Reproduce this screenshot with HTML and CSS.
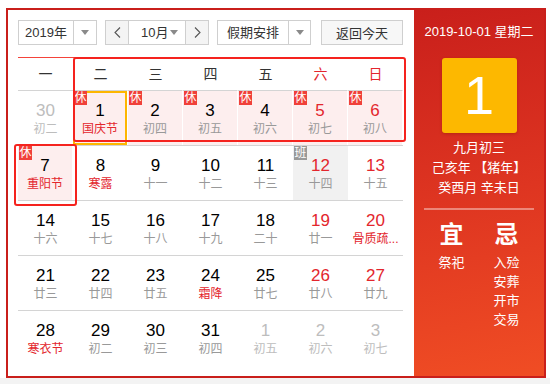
FILE: index.html
```html
<!DOCTYPE html>
<html lang="zh-CN">
<head>
    <meta charset="UTF-8">
    <meta name="viewport" content="width=device-width, initial-scale=1.0">
    <title>万年历</title>
    <link rel="stylesheet" href="styles.css">
</head>
<body>
    <div class="page">
        <div class="calendar">
            <div class="main">
                <!-- Toolbar -->
                <div class="toolbar">
                    <div class="select year-select">
                        <span class="select-text">2019年</span>
                        <span class="select-arrow"><i class="caret"></i></span>
                    </div>
                    <div class="select month-select">
                        <span class="nav-btn">
                            <svg width="7" height="11" viewBox="0 0 7 11"><path d="M6 0.5 L1 5.5 L6 10.5" fill="none" stroke="#555" stroke-width="1.1"/></svg>
                        </span>
                        <span class="month-mid">
                            <span class="select-text">10月</span>
                            <i class="caret"></i>
                        </span>
                        <span class="nav-btn">
                            <svg width="7" height="11" viewBox="0 0 7 11"><path d="M1 0.5 L6 5.5 L1 10.5" fill="none" stroke="#555" stroke-width="1.1"/></svg>
                        </span>
                    </div>
                    <div class="select holiday-select">
                        <span class="select-text">假期安排</span>
                        <span class="select-arrow"><i class="caret"></i></span>
                    </div>
                    <button class="today-btn">返回今天</button>
                </div>

                <!-- Month grid -->
                <div class="grid">
                    <div class="week-head">一</div>
                    <div class="week-head">二</div>
                    <div class="week-head">三</div>
                    <div class="week-head">四</div>
                    <div class="week-head">五</div>
                    <div class="week-head red">六</div>
                    <div class="week-head red">日</div>

                    <div class="day other"><b>30</b><span>初二</span></div>
                    <div class="day rest today"><em class="badge">休</em><b>1</b><span class="fest">国庆节</span></div>
                    <div class="day rest"><em class="badge">休</em><b>2</b><span>初四</span></div>
                    <div class="day rest"><em class="badge">休</em><b>3</b><span>初五</span></div>
                    <div class="day rest"><em class="badge">休</em><b>4</b><span>初六</span></div>
                    <div class="day rest weekend"><em class="badge">休</em><b>5</b><span>初七</span></div>
                    <div class="day rest weekend"><em class="badge">休</em><b>6</b><span>初八</span></div>

                    <div class="day rest"><em class="badge">休</em><b>7</b><span class="fest">重阳节</span></div>
                    <div class="day"><b>8</b><span class="fest">寒露</span></div>
                    <div class="day"><b>9</b><span>十一</span></div>
                    <div class="day"><b>10</b><span>十二</span></div>
                    <div class="day"><b>11</b><span>十三</span></div>
                    <div class="day work weekend"><em class="badge gray">班</em><b>12</b><span>十四</span></div>
                    <div class="day weekend"><b>13</b><span>十五</span></div>

                    <div class="day"><b>14</b><span>十六</span></div>
                    <div class="day"><b>15</b><span>十七</span></div>
                    <div class="day"><b>16</b><span>十八</span></div>
                    <div class="day"><b>17</b><span>十九</span></div>
                    <div class="day"><b>18</b><span>二十</span></div>
                    <div class="day weekend"><b>19</b><span>廿一</span></div>
                    <div class="day weekend"><b>20</b><span class="fest">骨质疏...</span></div>

                    <div class="day"><b>21</b><span>廿三</span></div>
                    <div class="day"><b>22</b><span>廿四</span></div>
                    <div class="day"><b>23</b><span>廿五</span></div>
                    <div class="day"><b>24</b><span class="fest">霜降</span></div>
                    <div class="day"><b>25</b><span>廿七</span></div>
                    <div class="day weekend"><b>26</b><span>廿八</span></div>
                    <div class="day weekend"><b>27</b><span>廿九</span></div>

                    <div class="day"><b>28</b><span class="fest">寒衣节</span></div>
                    <div class="day"><b>29</b><span>初二</span></div>
                    <div class="day"><b>30</b><span>初三</span></div>
                    <div class="day"><b>31</b><span>初四</span></div>
                    <div class="day other"><b>1</b><span>初五</span></div>
                    <div class="day other"><b>2</b><span>初六</span></div>
                    <div class="day other"><b>3</b><span>初七</span></div>

                    <!-- holiday frames -->
                    <div class="frame frame-week"></div>
                    <div class="frame frame-mon"></div>
                </div>
            </div>

            <!-- Day detail -->
            <div class="side">
                <div class="side-date">2019-10-01 星期二</div>
                <div class="big-day">1</div>
                <div class="lunar-info">
                    <div>九月初三</div>
                    <div>己亥年 【猪年】</div>
                    <div>癸酉月 辛未日</div>
                </div>
                <div class="side-line"></div>
                <div class="almanac">
                    <div class="almanac-col">
                        <div class="almanac-title">宜</div>
                        <div>祭祀</div>
                    </div>
                    <div class="almanac-col">
                        <div class="almanac-title">忌</div>
                        <div>入殓</div>
                        <div>安葬</div>
                        <div>开市</div>
                        <div>交易</div>
                    </div>
                </div>
            </div>
        </div>
    </div>
    <div class="foot"></div>
</body>
</html>
```

FILE: styles.css
```css
/* General */
body {
    margin: 0;
    padding: 0;
    background: #fff;
    font-family: 'Liberation Sans', 'Noto Sans CJK SC', sans-serif;
    color: #333;
    overflow: hidden;
}

.page {
    padding: 8px 0 0 6px;
}

.foot {
    height: 10px;
    background: #f3f3f3;
}

.calendar {
    display: flex;
    width: 536px;
    height: 366px;
    border: 2px solid #c91f1b;
}

/* Left part */
.main {
    width: 406px;
    box-sizing: border-box;
    padding: 10px 11px 0 10px;
}

.toolbar {
    display: flex;
    height: 25px;
    margin-bottom: 12px;
}

.select {
    display: flex;
    box-sizing: border-box;
    height: 25px;
    border: 1px solid #cfcfcf;
    background: #fff;
    font-size: 13px;
    line-height: 23px;
    color: #333;
}

.year-select {
    width: 79px;
    margin-right: 8px;
}

.year-select .select-text {
    width: 54px;
    text-align: center;
}

.select-arrow {
    flex: 1;
    display: flex;
    align-items: center;
    justify-content: center;
    border-left: 1px solid #cfcfcf;
}

.caret {
    display: block;
    width: 0;
    height: 0;
    border-left: 4px solid transparent;
    border-right: 4px solid transparent;
    border-top: 5px solid #8a8a8a;
}

.month-select {
    width: 104px;
    margin-right: 8px;
}

.nav-btn {
    width: 22px;
    display: flex;
    align-items: center;
    justify-content: center;
    background: #f4f4f4;
}

.month-mid {
    flex: 1;
    display: flex;
    align-items: center;
    padding: 0 7px 0 12px;
    border-left: 1px solid #cfcfcf;
    border-right: 1px solid #cfcfcf;
    justify-content: space-between;
}

.holiday-select {
    width: 94px;
    margin-right: 10px;
}

.holiday-select .select-text {
    width: 70px;
    text-align: center;
}

.today-btn {
    width: 82px;
    height: 25px;
    padding: 0;
    border: 1px solid #cfcfcf;
    background: #f7f7f7;
    font-family: 'Liberation Sans', 'Noto Sans CJK SC', sans-serif;
    font-size: 13px;
    color: #333;
}

/* Grid */
.grid {
    position: relative;
    display: grid;
    grid-template-columns: repeat(7, 55px);
    border-top: 1px solid #f4433a;
}

.week-head {
    height: 32px;
    line-height: 32px;
    text-align: center;
    font-size: 14px;
    color: #333;
}

.week-head.red {
    color: #e3262d;
}

.day {
    position: relative;
    box-sizing: border-box;
    height: 55px;
    border-top: 1px solid #d4d4d4;
    padding-top: 10px;
    text-align: center;
}

.day b {
    display: block;
    font-weight: normal;
    font-size: 17px;
    line-height: 20px;
    color: #000;
}

.day span {
    display: block;
    font-size: 12px;
    line-height: 16px;
    color: #999;
    white-space: nowrap;
}

.day span.fest {
    color: #e3262d;
}

.day.weekend b {
    color: #e3262d;
}

.day.other b,
.day.other span {
    color: #bdbdbd;
}

.day.rest {
    background: #fdeeee;
    border-right: 1px solid #fff;
}

.day.work {
    background: #f1f1f1;
}

.day.today {
    box-shadow: inset 0 0 0 2px #fdb600;
}

.badge {
    position: absolute;
    top: 0;
    left: 1px;
    width: 13px;
    height: 14px;
    background: #f0403a;
    color: #fff;
    font-style: normal;
    font-size: 12px;
    line-height: 14px;
    text-align: center;
}

.badge.gray {
    background: #999;
}

.frame {
    position: absolute;
    box-sizing: border-box;
    border: 2px solid #f5231e;
    border-radius: 3px;
    pointer-events: none;
}

.frame-week {
    left: 55px;
    top: -1px;
    width: 333px;
    height: 85px;
}

.frame-mon {
    left: -4px;
    top: 86px;
    width: 63px;
    height: 62px;
}

/* Right panel */
.side {
    width: 130px;
    padding-top: 12px;
    background: linear-gradient(170deg, #c91f1b 0%, #de3521 50%, #f04d24 100%);
    color: #fff;
    text-align: center;
}

.side-date {
    font-size: 13px;
    line-height: 20px;
}

.big-day {
    width: 75px;
    height: 75px;
    margin: 16px auto 0 auto;
    background: #fdb800;
    border-radius: 3px;
    box-shadow: 0 1px 3px rgba(120, 20, 0, 0.35);
    font-size: 54px;
    line-height: 75px;
}

.lunar-info {
    margin-top: 5px;
    font-size: 13px;
    line-height: 20px;
}

.side-line {
    height: 2px;
    margin: 10px 10px 0 10px;
    background: rgba(255, 255, 255, 0.4);
}

.almanac {
    display: flex;
    padding: 0 10px;
    margin-top: 10px;
}

.almanac-col {
    flex: 1;
    font-size: 13px;
    line-height: 19px;
}

.almanac-title {
    font-size: 24px;
    font-weight: bold;
    line-height: 30px;
    margin-bottom: 3px;
}
```
